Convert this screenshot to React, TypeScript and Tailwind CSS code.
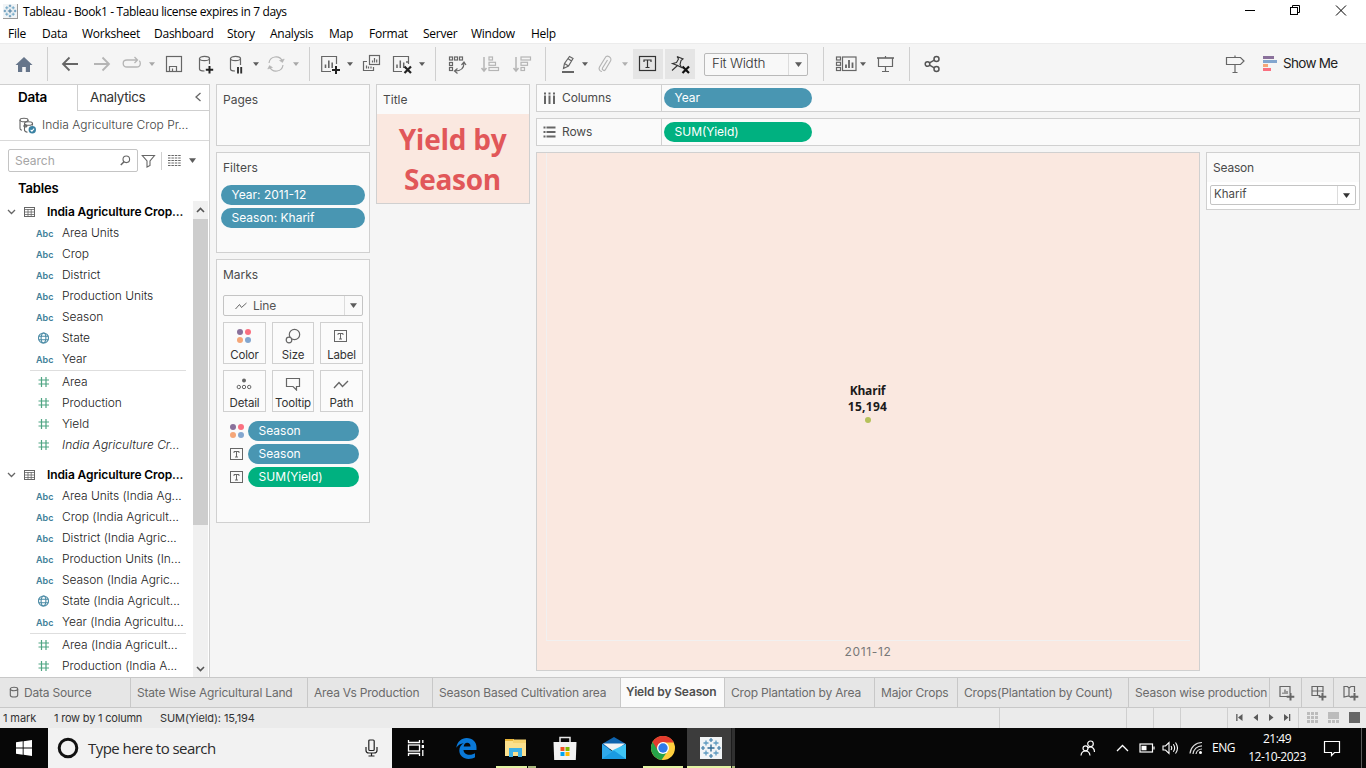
import React from 'react';

type Kids = { children?: React.ReactNode };

/* ---------- small drawing helpers ---------- */

function Ic({ children, cls = '', w = 20, h = 20, stroke = '#666666', sw = 1.2 }: Kids & { cls?: string; w?: number; h?: number; stroke?: string; sw?: number }) {
  return (
    <svg width={w} height={h} viewBox={`0 0 ${w} ${h}`} fill="none" stroke={stroke} strokeWidth={sw} className={`block shrink-0 ${cls}`}>
      {children}
    </svg>
  );
}

function Caret({ cls = '', color = '#5c5c5c', w = 6 }: { cls?: string; color?: string; w?: number }) {
  return (
    <svg width={w} height={w - 2} viewBox="0 0 6 4" preserveAspectRatio="none" className={`block shrink-0 ${cls}`}>
      <path d="M0 0.2H6L3 3.9Z" fill={color} />
    </svg>
  );
}

function Sep({ cls = '' }: { cls?: string }) {
  return <div className={`h-[34px] w-px shrink-0 bg-[#cfcfcf] ${cls}`} />;
}

function TableauMark({ size, cls = '' }: { size: number; cls?: string }) {
  const mid = [[6, 6], [16, 6], [6, 16], [16, 16]];
  const tiny = [[11, 3], [11, 19], [3, 11], [19, 11]];
  return (
    <svg width={size} height={size} viewBox="0 0 22 22" className={`block shrink-0 ${cls}`}>
      <rect width="22" height="22" fill="#f1f4f6" />
      <path d="M11 7.5V14.5M7.5 11H14.5" stroke="#2f6a94" strokeWidth="1.4" />
      {mid.map(([x, y]) => (
        <path key={`${x}-${y}`} d={`M${x} ${y - 2.5}V${y + 2.5}M${x - 2.5} ${y}H${x + 2.5}`} stroke="#5f9bc0" strokeWidth="1.3" />
      ))}
      {tiny.map(([x, y]) => (
        <path key={`${x}-${y}`} d={`M${x} ${y - 2}V${y + 2}M${x - 2} ${y}H${x + 2}`} stroke="#3b7ba6" strokeWidth="1.2" />
      ))}
    </svg>
  );
}

function ColorDots() {
  return (
    <svg width="16" height="16" viewBox="0 0 16 16" className="block shrink-0">
      <circle cx="4" cy="4" r="3" fill="#8a719b" />
      <circle cx="12" cy="4" r="3" fill="#fa7080" />
      <circle cx="4" cy="12" r="3" fill="#f5a678" />
      <circle cx="12" cy="12" r="3" fill="#83a6cf" />
    </svg>
  );
}

function LabelIcon() {
  return (
    <Ic w={14} h={13} sw={1}>
      <rect x="0.5" y="0.5" width="12" height="11" />
      <path d="M4 5V3.5H9V5M6.5 3.5V9M5 9H8" />
    </Ic>
  );
}

/* ---------- window chrome ---------- */

function TitleBar() {
  return (
    <div className="flex h-[22px] items-center bg-white pl-[3px] font-['Open_Sans',sans-serif] text-[12px] text-black">
      <div className="mt-px h-[15px] w-[15px] border-r border-b border-[#9a9a9a]">
        <TableauMark size={14} />
      </div>
      <div className="mt-[2px] ml-[5px] tracking-[-0.36px] whitespace-nowrap">Tableau - Book1 - Tableau license expires in 7 days</div>
      <Ic w={110} h={20} cls="mr-[14px] ml-auto" stroke="#000" sw={1}>
        <path d="M3 9.5H13" />
        <path d="M50.5 6.5V4.5H57.5V11.5H55.5" />
        <rect x="48.5" y="6.5" width="7" height="7" />
        <path d="M94 4.5L104 14.5M104 4.5L94 14.5" />
      </Ic>
    </div>
  );
}

function MenuBar() {
  return (
    <div className="flex h-[21px] items-center bg-white pl-2 font-['Open_Sans',sans-serif] text-[12px] tracking-[-0.25px] text-black">
      <div className="mt-[2px] w-[34px]">File</div>
      <div className="mt-[2px] w-10">Data</div>
      <div className="mt-[2px] w-[72px]">Worksheet</div>
      <div className="mt-[2px] w-[73px]">Dashboard</div>
      <div className="mt-[2px] w-[43px]">Story</div>
      <div className="mt-[2px] w-[59px]">Analysis</div>
      <div className="mt-[2px] w-10">Map</div>
      <div className="mt-[2px] w-[54px]">Format</div>
      <div className="mt-[2px] w-12">Server</div>
      <div className="mt-[2px] w-[60px]">Window</div>
      <div className="mt-[2px]">Help</div>
    </div>
  );
}

function Toolbar() {
  return (
    <div className="flex h-[41px] items-center border-t border-[#ececec] bg-[#f5f5f5]">
      <Ic cls="ml-[14px]" stroke="none">
        <path d="M1.5 11L10 3L18.5 11H16V18H11.8V13H8.2V18H4V11Z" fill="#66758a" />
      </Ic>
      <Sep cls="ml-[13px]" />
      <Ic cls="ml-3" sw={1.8}><path d="M18 10H3M9.5 3.5L3 10L9.5 16.5" /></Ic>
      <Ic cls="ml-3" stroke="#b5b5b5" sw={1.8}><path d="M2 10H17M10.5 3.5L17 10L10.5 16.5" /></Ic>
      <Ic cls="ml-[10px]" stroke="#b5b5b5" sw={1.3}>
        <path d="M15 6H5Q1.2 6 1.2 9.5T5 13H14.5Q18.3 13 18.3 9.5Q18.3 7.5 17.2 6.8M12.5 3L15.5 6L12.5 9" />
      </Ic>
      <Caret cls="ml-[7px]" color="#a8a8a8" />
      <Ic cls="ml-[9px]"><rect x="2.5" y="2.5" width="15" height="15" /><path d="M5.5 17.5V12.5H12.5V17.5M8.5 17V14.5" /></Ic>
      <Ic cls="ml-3">
        <ellipse cx="8.5" cy="4.5" rx="5" ry="2.2" />
        <path d="M3.5 4.5V15C3.5 16.3 6 17 8.5 17M13.5 4.5V10" />
        <path d="M13.5 12V19.5M9.8 15.8H17.2" stroke="#222" strokeWidth="2" />
      </Ic>
      <Ic cls="ml-[10px]">
        <ellipse cx="9.5" cy="4.5" rx="5" ry="2.2" />
        <path d="M4.5 4.5V15C4.5 16.3 6.5 17 9 17M14.5 4.5V11" />
        <path d="M12 13V19.5M15.2 13V19.5" stroke="#333" strokeWidth="1.9" />
      </Ic>
      <Caret cls="ml-[7px]" />
      <Ic cls="ml-[7px]" stroke="#b5b5b5">
        <path d="M3 9A7 7 0 0 1 16.3 7M17 11A7 7 0 0 1 3.7 13" />
        <path d="M18.3 5L16.5 8.5L13.5 6.5ZM1.7 15L3.5 11.5L6.5 13.5Z" fill="#b5b5b5" strokeWidth="0.5" />
      </Ic>
      <Caret cls="ml-[7px]" color="#a8a8a8" />
      <Sep cls="ml-[10px]" />
      <Ic cls="ml-[11px]">
        <path d="M10 17.5H0.7V2.5H15.5V10" />
        <path d="M4.5 14V10.5M7.8 14V6.5M11.2 14V8.5" strokeWidth="1.6" />
        <path d="M15 12V20M11 16H19" stroke="#222" strokeWidth="2" />
      </Ic>
      <Caret cls="ml-[6px]" />
      <Ic cls="ml-2">
        <rect x="8.5" y="1.5" width="10" height="9" />
        <path d="M11.5 8.5V6.5M13.5 8.5V4M15.7 8.5V5.5" />
        <path d="M6 7.5H2.5V16.5H12.5V13M5.5 14.5V11.5M7.5 14.5V12.5M10 14.5V12.5" />
      </Ic>
      <Ic cls="ml-[11px]">
        <path d="M10 17.5H1.5V2.5H16.5V10" />
        <path d="M5 14V10.5M8.3 14V6.5M11.7 14V8.5M15 9V7" strokeWidth="1.5" />
        <path d="M12.5 12.5L19 19M19 12.5L12.5 19" stroke="#222" strokeWidth="2.2" />
      </Ic>
      <Caret cls="ml-[7px]" />
      <Sep cls="ml-[10px]" />
      <Ic cls="ml-[11px]">
        <rect x="2.5" y="3" width="3" height="3" /><rect x="7.5" y="3" width="3" height="3" /><rect x="12.5" y="3" width="3" height="3" />
        <rect x="2.5" y="8.5" width="3" height="3" /><rect x="2.5" y="13.5" width="3" height="3" />
        <path d="M17 9C17 14 14 17 8 17M14.5 11L17 8L19 11M10.5 14.5L7.5 17L10.5 19.5" />
      </Ic>
      <Ic cls="ml-[13px]" stroke="#b5b5b5">
        <path d="M4 3V16.5M1.5 14L4 17L6.5 14" strokeWidth="1.5" />
        <rect x="9" y="3" width="3.5" height="3" /><rect x="9" y="8.3" width="6.5" height="3" /><rect x="9" y="13.5" width="9.5" height="3" />
      </Ic>
      <Ic cls="ml-3" stroke="#b5b5b5">
        <path d="M4 3V16.5M1.5 14L4 17L6.5 14" strokeWidth="1.5" />
        <rect x="9" y="3" width="9.5" height="3" /><rect x="9" y="8.3" width="6.5" height="3" /><rect x="9" y="13.5" width="3.5" height="3" />
      </Ic>
      <Sep cls="ml-[13px]" />
      <Ic cls="ml-3">
        <path d="M5.5 14.5L6.5 9.5L11.5 2.5L15 4.5L10.5 12L5.5 14.5ZM6.5 9.5L10.5 12M10.2 4.8L13.5 7" />
        <path d="M4 18H16" strokeWidth="2" />
      </Ic>
      <Caret cls="ml-1" />
      <Ic cls="ml-[7px]" stroke="#b5b5b5">
        <path d="M12.5 6L7.5 14A1.6 1.6 0 0 0 10.5 15.5L15.5 7A3 3 0 0 0 10 4L4.5 13A3 3 0 0 0 7 17.5" />
      </Ic>
      <Caret cls="ml-[7px]" color="#b0b0b0" />
      <div className="ml-[5px] flex h-[30px] w-[30px] items-center justify-center bg-[#e5e5e5]">
        <Ic stroke="#333"><rect x="1.5" y="2.5" width="16" height="14" /><path d="M6 8V6H13V8M9.5 6V13.5M7.5 13.5H11.5" /></Ic>
      </div>
      <div className="ml-[2px] flex h-[30px] w-[30px] items-center justify-center bg-[#e5e5e5]">
        <Ic stroke="#333" sw={1.1}>
          <path d="M7 2.5L13 5L11 6.5L10 10.5L11.5 13.5L7.5 11.5L2 16.5M7.5 11.5L2.5 9.5L6.5 8.5L8.5 5L7 2.5" />
          <path d="M12.5 12.5L19 19M19 12.5L12.5 19" stroke="#111" strokeWidth="2.2" />
        </Ic>
      </div>
      <div className="ml-[9px] flex h-[23px] w-[104px] items-center rounded-[2px] border border-[#b9b9b9] bg-[#f8f8f8]">
        <div className="flex h-full flex-1 items-center pb-[2px] pl-[7px] text-[13.5px] font-light tracking-[-0.25px] text-[#333]">Fit Width</div>
        <div className="flex h-full w-[19px] items-center justify-center border-l border-[#dcdcdc]"><Caret w={7} /></div>
      </div>
      <Sep cls="ml-[15px]" />
      <Ic cls="ml-[11px]" w={22}>
        <rect x="1.5" y="3" width="4" height="3" /><rect x="1.5" y="8.3" width="4" height="3" /><rect x="1.5" y="13.5" width="4" height="3" />
        <rect x="7.5" y="3" width="13.5" height="13.5" />
        <path d="M11 14V10.5M14 14V6M17.5 14V8.5" strokeWidth="1.8" />
      </Ic>
      <Caret cls="ml-[3px]" />
      <Ic cls="ml-[9px]">
        <path d="M2 4H19" strokeWidth="1.6" />
        <path d="M3.5 4V12.5H17.5V4M10.5 2V4M10.5 12.5V17.5M7 17.5H14" />
      </Ic>
      <Sep cls="ml-[14px]" />
      <Ic cls="ml-3" sw={1.5} stroke="#555">
        <circle cx="5.5" cy="10" r="2.3" /><circle cx="14.5" cy="5" r="2.5" /><circle cx="14.5" cy="15" r="2.5" />
        <path d="M7.5 8.8L12.3 6.2M7.5 11.2L12.3 13.8" />
      </Ic>
      <Ic cls="mr-[18px] ml-auto">
        <path d="M1.5 3.5H15.5L19 7L15.5 10.5H1.5ZM10 1.5V3.5M10 10.5V18.5M7.5 18.5H12.5" />
      </Ic>
      <svg width="15" height="16" viewBox="0 0 15 16" className="block shrink-0">
        <rect width="11" height="3" fill="#8a719b" /><rect y="4" width="14" height="3" fill="#83a6cf" />
        <rect y="8" width="5" height="3" fill="#f5a678" /><rect y="12" width="8" height="3" fill="#fa7080" />
      </svg>
      <div className="mr-[27px] ml-[5px] w-[56px] pb-[2px] text-[13.5px] tracking-[-0.7px] whitespace-nowrap text-[#222]">Show Me</div>
    </div>
  );
}

/* ---------- data pane ---------- */

type Kind = 'abc' | 'geo' | 'num';

function FieldRow({ kind, label, italic = false }: { kind: Kind; label: string; italic?: boolean }) {
  return (
    <div className="flex h-[21px] items-center pb-[2px] pl-[36px]">
      <div className="w-[26px] text-[9px] font-semibold text-[#3f7f99]">
        {kind === 'abc' && <span className="relative top-px">Abc</span>}
        {kind === 'geo' && (
          <Ic w={16} h={12} stroke="#4a8aa5" sw={1.1}>
            <circle cx="7.5" cy="6" r="5" /><ellipse cx="7.5" cy="6" rx="2.4" ry="5" /><path d="M2.5 4.3H12.5M2.5 7.7H12.5" />
          </Ic>
        )}
        {kind === 'num' && (
          <Ic w={16} h={12} stroke="#4fa583" sw={1.2}>
            <path d="M5.5 1V11M10 1V11M2.5 4H13M2.5 8H13" />
          </Ic>
        )}
      </div>
      <div className={italic ? 'text-[12px] font-light whitespace-nowrap text-[#222] italic' : 'text-[12px] font-light tracking-[-0.05px] whitespace-nowrap text-[#222]'}>{label}</div>
    </div>
  );
}

function TableHeader() {
  return (
    <div className="flex h-[22px] items-center pl-[7px]">
      <Ic w={9} h={6} sw={1.3}><path d="M1 1L4.5 4.5L8 1" /></Ic>
      <Ic w={11} h={10} cls="ml-2" sw={1}><rect x="0.5" y="0.5" width="10" height="9" /><path d="M0 2.5H11M0 5H11M0 7.5H11M4 2V10M7.2 2V10" strokeWidth="0.8" /></Ic>
      <div className="ml-[12px] text-[12px] font-semibold tracking-[-0.1px] whitespace-nowrap text-black">India Agriculture Crop...</div>
    </div>
  );
}

const firstDims: [Kind, string][] = [['abc', 'Area Units'], ['abc', 'Crop'], ['abc', 'District'], ['abc', 'Production Units'], ['abc', 'Season'], ['geo', 'State'], ['abc', 'Year']];
const secondDims: [Kind, string][] = [
  ['abc', 'Area Units (India Ag...'], ['abc', 'Crop (India Agricult...'], ['abc', 'District (India Agric...'], ['abc', 'Production Units (In...'],
  ['abc', 'Season (India Agric...'], ['geo', 'State (India Agricult...'], ['abc', 'Year (India Agricultu...'],
];

function DataPane() {
  return (
    <div className="flex w-[210px] shrink-0 flex-col border-t border-r border-[#cfcfcf] bg-white text-[#333]">
      <div className="flex h-[26px] shrink-0 text-[13.5px]">
        <div className="w-[77px] pt-[2px] pl-[18px] font-semibold tracking-[-0.3px] text-black">Data</div>
        <div className="flex flex-1 items-start justify-between border-b border-l border-[#cfcfcf] pt-[2px] pr-[7px] pl-[12px] tracking-[-0.35px]">
          Analytics
          <Ic w={8} h={10} cls="mt-[5px]" sw={1.3}><path d="M6.5 1L2 5L6.5 9" /></Ic>
        </div>
      </div>
      <div className="flex h-[30px] shrink-0 items-center border-b border-[#d9d9d9] pl-[19px] text-[12px] text-[#444]">
        <Ic w={18} h={17} sw={1.1}>
          <ellipse cx="5" cy="3" rx="4" ry="1.8" /><path d="M1 3V11.5C1 12.5 2 13 3 13.3M9 3V4" />
          <ellipse cx="9.5" cy="6.5" rx="4" ry="1.8" /><path d="M5.5 6.5V13C5.5 14 7 15 8.5 15.2M13.5 6.5V8.5M4 9H8M6.5 7.5L8 9L6.5 10.5" />
          <circle cx="13.3" cy="12.8" r="3.7" fill="#3a82a3" stroke="none" /><path d="M11.6 12.8L12.9 14.1L15.1 11.6" stroke="#fff" />
        </Ic>
        <div className="ml-[5px] pb-px font-light whitespace-nowrap">India Agriculture Crop Pr...</div>
      </div>
      <div className="flex h-[39px] shrink-0 items-center pl-2">
        <div className="flex h-[23px] w-[130px] items-center justify-between rounded-[2px] border border-[#c4c4c4] pr-[6px] pl-[6px] text-[12px] text-[#a5a5a5]">
          Search
          <Ic w={11} h={11} sw={1.1}><circle cx="6.3" cy="4.3" r="3.3" /><path d="M4 6.8L0.8 10" strokeWidth="1.5" /></Ic>
        </div>
        <Ic w={15} h={14} cls="ml-[3px]" sw={1.1}><path d="M1.3 1.5H13.5L9 7V11.5L6 13V7Z" /></Ic>
        <div className="ml-[5px] h-[18px] w-px bg-[#d0d0d0]" />
        <Ic w={13} h={11} cls="ml-[6px]" sw={1}><path d="M0 0.5H13M0 3H13M0 5.5H13M0 8H13M0 10.5H13" strokeDasharray="2.5 0.9" /></Ic>
        <Caret cls="ml-[8px]" w={7} />
      </div>
      <div className="h-[21px] shrink-0 pl-[18px] text-[13px] leading-[17px] font-semibold tracking-[-0.15px] text-black">Tables</div>
      <div className="flex min-h-0 flex-1">
        <div className="min-w-0 flex-1 overflow-hidden">
          <TableHeader />
          {firstDims.map(([k, l]) => <FieldRow key={l} kind={k} label={l} />)}
          <div className="mr-[7px] ml-[30px] h-px bg-[#dedede]" />
          <div className="h-px" />
          <FieldRow kind="num" label="Area" />
          <FieldRow kind="num" label="Production" />
          <FieldRow kind="num" label="Yield" />
          <FieldRow kind="num" label="India Agriculture Cr..." italic />
          <div className="h-2" />
          <TableHeader />
          {secondDims.map(([k, l]) => <FieldRow key={l} kind={k} label={l} />)}
          <div className="mr-[7px] ml-[30px] h-px bg-[#dedede]" />
          <div className="h-px" />
          <FieldRow kind="num" label="Area (India Agricult..." />
          <FieldRow kind="num" label="Production (India A..." />
        </div>
        <div className="mr-px flex w-[15px] shrink-0 flex-col items-center justify-between bg-[#f0f0f0] pb-[5px]">
          <div className="flex w-full flex-col items-center pt-[6px]">
            <Ic w={9} h={6} sw={1.6} stroke="#555"><path d="M1 5L4.5 1.5L8 5" /></Ic>
            <div className="mt-[6px] h-[306px] w-full bg-[#cdcdcd]" />
          </div>
          <Ic w={9} h={6} sw={1.6} stroke="#555"><path d="M1 1L4.5 4.5L8 1" /></Ic>
        </div>
      </div>
    </div>
  );
}

/* ---------- shelves and cards ---------- */

function Pill({ children, cls = '' }: Kids & { cls?: string }) {
  return <div className={`flex h-5 items-center rounded-full pl-[10.5px] text-[12px] whitespace-nowrap text-white ${cls}`}>{children}</div>;
}

function MarkButton({ icon, label, w }: { icon: React.ReactNode; label: string; w: string }) {
  return (
    <div className={`flex h-[42px] flex-col items-center border border-[#d0d0d0] bg-[#fbfbfb] text-[11.5px] text-[#333] ${w}`}>
      <div className="flex h-[26px] items-center pr-px">{icon}</div>
      <div className="-mt-px leading-[14px] tracking-[-0.15px] whitespace-nowrap">{label}</div>
    </div>
  );
}

function Cards() {
  return (
    <div className="flex w-[154px] shrink-0 flex-col gap-[6px] text-[12px] text-[#4a4a4a]">
      <div className="h-[62px] border border-[#d0d0d0] bg-[#fafafa] pt-[6px] pl-[6px]">Pages</div>
      <div className="h-[101px] border border-[#d0d0d0] bg-[#fafafa] px-1 pt-[6px]">
        <div className="pl-[2px]">Filters</div>
        <div className="mt-[8px] flex flex-col gap-[3px]">
          <Pill cls="bg-[#4996b2]">Year: 2011-12</Pill>
          <Pill cls="bg-[#4996b2]">Season: Kharif</Pill>
        </div>
      </div>
      <div className="h-[264px] border border-[#d0d0d0] bg-[#fafafa] px-[6px] pt-[6px]">
        <div>Marks</div>
        <div className="mt-[11px] flex h-[21px] w-[140px] items-center rounded-[2px] border border-[#c4c4c4] text-[#555]">
          <Ic w={12} h={8} cls="ml-[11px]" sw={1}><path d="M0.5 7L4.5 2.5L6.5 5.5L11.5 1" /></Ic>
          <div className="ml-[6px] flex-1 tracking-[-0.2px]">Line</div>
          <div className="flex h-full w-[18px] items-center justify-center border-l border-[#dcdcdc]"><Caret w={7} /></div>
        </div>
        <div className="mt-[6px] flex w-[140px] justify-between">
          <MarkButton w="w-[43px]" label="Color" icon={<ColorDots />} />
          <MarkButton w="w-[42px]" label="Size" icon={<Ic w={16} h={16}><circle cx="9.5" cy="6.5" r="5.2" /><circle cx="4" cy="12" r="2.8" fill="#fbfbfb" /></Ic>} />
          <MarkButton w="w-[43px]" label="Label" icon={<LabelIcon />} />
        </div>
        <div className="mt-[6px] flex w-[140px] justify-between">
          <MarkButton w="w-[43px]" label="Detail" icon={<Ic w={16} h={14} sw={1}><circle cx="8" cy="3.5" r="2" fill="#666" stroke="none" /><circle cx="2.8" cy="10" r="1.7" /><circle cx="8" cy="10" r="1.7" /><circle cx="13.2" cy="10" r="1.7" /></Ic>} />
          <MarkButton w="w-[42px]" label="Tooltip" icon={<Ic w={16} h={14}><path d="M1.5 1.5H14.5V9.5H11.5V13L8 9.5H1.5Z" /></Ic>} />
          <MarkButton w="w-[43px]" label="Path" icon={<Ic w={16} h={12} sw={1.4}><path d="M1 10L6 4.5L9.5 8.5L15 3" /></Ic>} />
        </div>
        <div className="mt-[9px] flex flex-col gap-[3px] pl-[6px]">
          <div className="flex items-center gap-[3px]"><ColorDots /><Pill cls="w-[111px] bg-[#4996b2]">Season</Pill></div>
          <div className="flex items-center gap-[4px] pl-px"><LabelIcon /><Pill cls="w-[111px] bg-[#4996b2]">Season</Pill></div>
          <div className="flex items-center gap-[4px] pl-px"><LabelIcon /><Pill cls="w-[111px] bg-[#00b180]">SUM(Yield)</Pill></div>
        </div>
      </div>
    </div>
  );
}

function Shelf({ icon, label, children }: Kids & { icon: React.ReactNode; label: string }) {
  return (
    <div className="flex h-[28px] shrink-0 items-center border border-[#d0d0d0] bg-[#fafafa] text-[12px] text-[#4a4a4a]">
      <div className="flex h-full w-[125px] items-center border-r border-[#d0d0d0] pl-[6px]">
        {icon}
        <div className="ml-[6px] tracking-[-0.1px]">{label}</div>
      </div>
      {children}
    </div>
  );
}

function Workspace() {
  return (
    <div className="flex min-w-0 flex-1 gap-[6px] pr-[6px] pb-[6px] pl-[6px]">
      <Cards />
      <div className="flex w-[154px] shrink-0 flex-col">
        <div className="flex h-[120px] flex-col border border-[#d0d0d0] bg-[#fafafa]">
          <div className="h-[29px] shrink-0 pt-[6px] pl-[6px] text-[12px] text-[#4a4a4a]">Title</div>
          <div className="flex-1 bg-[#fae8e0] pt-[5px] pr-px text-center font-['Open_Sans',sans-serif] text-[28px] leading-[40px] font-bold tracking-[-0.25px] text-[#e15759]">
            Yield by<br />Season
          </div>
        </div>
      </div>
      <div className="flex min-w-0 flex-1 flex-col gap-[6px]">
        <Shelf label="Columns" icon={<Ic w={13} h={13} sw={2}><path d="M2 3.5V12M6.5 3.5V12M11 3.5V12M2 0.5V2.5M6.5 0.5V2.5M11 0.5V2.5" /></Ic>}>
          <Pill cls="ml-[2px] w-[148px] bg-[#4996b2]">Year</Pill>
        </Shelf>
        <Shelf label="Rows" icon={<Ic w={13} h={13} sw={1.8}><path d="M3.5 1.5H12.5M3.5 6H12.5M3.5 10.5H12.5M0.5 1.5H2.5M0.5 6H2.5M0.5 10.5H2.5" /></Ic>}>
          <Pill cls="ml-[2px] w-[148px] bg-[#00b180]">SUM(Yield)</Pill>
        </Shelf>
        <div className="flex min-h-0 flex-1 gap-[6px]">
          <div className="flex flex-1 flex-col border border-[#d0d0d0] bg-[#fae8e0] pr-[9px] pl-[9px]">
            <div className="flex flex-1 flex-col items-center border-b border-l border-[#f1f0f0] pt-[230px] pr-[2px] font-['Open_Sans',sans-serif] text-[12px] leading-4 font-bold text-[#1a1a1a]">
              <div className="tracking-[-0.2px]">Kharif</div>
              <div className="tracking-[0.3px]">15,194</div>
              <div className="mt-[2px] mr-[-1px] h-[6px] w-[6px] rounded-full bg-[#b5c15a]" />
            </div>
            <div className="h-[29px] pt-[2px] text-center text-[12px] tracking-[0.65px] text-[#787878]">2011-12</div>
          </div>
          <div className="w-[154px] shrink-0">
            <div className="h-[58px] border border-[#d0d0d0] bg-white text-[12px] text-[#4a4a4a]">
              <div className="h-[29px] bg-[#fafafa] pt-[6px] pl-[6px] tracking-[-0.2px]">Season</div>
              <div className="mx-[3px] mt-[3px] flex h-5 items-center rounded-[2px] border border-[#c4c4c4] text-[11.5px]">
                <div className="flex-1 pl-[3px]">Kharif</div>
                <div className="flex h-full w-[18px] items-center justify-center border-l border-[#dcdcdc]"><Caret w={7} color="#333" /></div>
              </div>
            </div>
          </div>
        </div>
      </div>
    </div>
  );
}

/* ---------- bottom bars ---------- */

function SheetTab({ label, w }: { label: string; w: string }) {
  return <div className={`flex h-full items-center border-r border-[#c8c8c8] pl-[6px] whitespace-nowrap ${w}`}>{label}</div>;
}

function SheetTabs() {
  return (
    <div className="flex h-[31px] shrink-0 border-t border-b border-[#c8c8c8] bg-[#e6e6e6] text-[12px] tracking-[-0.19px] text-[#6b6b6b]">
      <div className="flex w-[131px] items-center border-r border-[#c8c8c8] pl-[9px]">
        <Ic w={10} h={12} sw={1.1} cls="-mt-[2px]"><ellipse cx="5" cy="3" rx="3.7" ry="1.7" /><path d="M1.3 3V9.3C1.3 11.6 8.7 11.6 8.7 9.3V3" /></Ic>
        <div className="ml-[5px]">Data Source</div>
      </div>
      <SheetTab w="w-[177px]" label="State Wise Agricultural Land" />
      <SheetTab w="w-[125px]" label="Area Vs Production" />
      <SheetTab w="w-[188px]" label="Season Based Cultivation area" />
      <div className="flex h-full w-[104px] items-center border-r border-[#c8c8c8] bg-[#fafafa] pb-[2px] pl-[5px] font-semibold tracking-[-0.15px] whitespace-nowrap text-[#4f4f4f]">Yield by Season</div>
      <SheetTab w="w-[150px]" label="Crop Plantation by Area" />
      <SheetTab w="w-[83px]" label="Major Crops" />
      <SheetTab w="w-[171px]" label="Crops(Plantation by Count)" />
      <SheetTab w="w-[141px]" label="Season wise production" />
      <div className="flex w-[32px] items-center justify-center border-r border-[#c8c8c8]">
        <Ic w={16} h={16} cls="ml-[3px]"><path d="M9 11.5H1V1.5H11V8M4 9V7.5M6 9V4.5M8 9V6" /><path d="M11.5 8V15.5M7.7 11.8H15.3" strokeWidth="2" /></Ic>
      </div>
      <div className="flex w-[32px] items-center justify-center border-r border-[#c8c8c8]">
        <Ic w={16} h={16} cls="ml-[3px]"><path d="M9 10.5H1V1.5H12V7.5M1 6H12M6.5 1.5V10.5" /><path d="M11.5 8V15.5M7.7 11.8H15.3" strokeWidth="2" /></Ic>
      </div>
      <div className="flex flex-1 items-center justify-center">
        <Ic w={16} h={16} cls="ml-[1px]"><path d="M8 12.5L6 11L1 12V1.5H4.5L6 3V11M6 3L8 1.5H11.5V7" /><path d="M11.5 8V15.5M7.7 11.8H15.3" strokeWidth="2" /></Ic>
      </div>
    </div>
  );
}

function StatusBar() {
  return (
    <div className="flex h-5 shrink-0 items-center bg-[#ebebeb] pl-[3px] text-[11px] text-[#333]">
      <div className="w-[51px] tracking-[-0.1px] whitespace-nowrap">1 mark</div>
      <div className="w-[106px] tracking-[-0.2px] whitespace-nowrap">1 row by 1 column</div>
      <div className="tracking-[-0.1px] whitespace-nowrap">SUM(Yield): 15,194</div>
      <div className="ml-auto flex h-full">
        <div className="h-full w-[127px] border-l border-[#cfcfcf]" />
        <div className="h-full w-[27px] border-l border-[#cfcfcf]" />
        <div className="h-full w-[27px] border-l border-[#cfcfcf]" />
        <div className="h-full w-[47px] border-l border-[#cfcfcf]" />
        <div className="flex h-full w-[71px] items-center border-l border-[#cfcfcf]">
          <svg width="70" height="10" viewBox="0 0 70 10" fill="#5a5a5a" className="block">
            <path d="M8.2 1H9.5V8H8.2ZM14.5 1V8L10 4.5Z" />
            <path d="M30 1V8L25.5 4.5Z" />
            <path d="M41 1V8L45.5 4.5Z" />
            <path d="M56 1V8L60.5 4.5ZM61 1H62.3V8H61Z" />
          </svg>
        </div>
        <div className="flex h-full w-[68px] items-center border-l border-[#cfcfcf]">
          <svg width="66" height="12" viewBox="0 0 66 12" className="block">
            {[0, 4, 8].map((x) => [0, 4, 8].map((y) => <rect key={`${x}-${y}`} x={8 + x} y={y} width="3" height="3" fill="#bcbcbc" />))}
            <rect x="29" y="0" width="11" height="7" fill="#bcbcbc" />
            <rect x="29" y="8" width="3" height="3" fill="#bcbcbc" /><rect x="33" y="8" width="3" height="3" fill="#bcbcbc" /><rect x="37" y="8" width="3" height="3" fill="#bcbcbc" />
            <rect x="50" y="0" width="11" height="11" fill="#666" />
          </svg>
        </div>
      </div>
    </div>
  );
}

function TaskSlot({ children, cls = '' }: Kids & { cls?: string }) {
  return <div className={`flex h-full w-[49px] shrink-0 flex-col items-center ${cls}`}>{children}</div>;
}

function Taskbar() {
  return (
    <div className="flex h-10 shrink-0 items-center bg-[#070707] font-['Open_Sans',sans-serif] text-white">
      <div className="flex w-12 items-center justify-center">
        <svg width="16" height="16" viewBox="0 0 16 16" fill="#fff"><path d="M0 2.2L6.7 1.3V7.5H0ZM7.6 1.2L16 0V7.5H7.6ZM0 8.4H6.7V14.7L0 13.8ZM7.6 8.4H16V16L7.6 14.8Z" /></svg>
      </div>
      <div className="flex h-full w-[344px] items-center bg-[#f2f2f2] text-[15px] text-[#2b2b2b]">
        <Ic w={22} h={22} cls="ml-[9px]" stroke="#111" sw={3}><circle cx="11" cy="11" r="8.8" /></Ic>
        <div className="ml-[9px] flex-1 tracking-[-0.55px]">Type here to search</div>
        <Ic w={13} h={18} cls="mr-[14px]" stroke="#222" sw={1.2}><rect x="3.8" y="1" width="5.4" height="10.5" rx="1" /><path d="M1 8V11.5Q1 14 4 14H9Q12 14 12 11.5V8M6.5 14V17M3.5 17H9.5" /></Ic>
      </div>
      <TaskSlot cls="pt-[11px] pr-[2px]">
        <Ic w={18} h={18} stroke="#fff" sw={1.3}><path d="M1.5 1V3.5H12.5V1M1.5 17V14.5H12.5V17" /><rect x="1.5" y="6" width="11" height="6" /><path d="M15.8 1V4M15.8 11V17" /><rect x="14.7" y="6" width="2.3" height="3" fill="#fff" stroke="none" /></Ic>
      </TaskSlot>
      <TaskSlot cls="ml-[1px] pt-[10px]">
        <svg width="21" height="21" viewBox="0 0 21 21" className="block">
          <path d="M0.3 9.8C1 3.8 5.5 0 10.7 0C16.5 0 20.5 4 20.5 9.2V12H7.5C7.6 15 10.2 16.8 13.5 16.8C15.8 16.8 17.8 16 19 15.2V19.3C17.3 20.4 15 21 12.6 21C7.2 21 3.3 17.5 3.3 12.6C3.3 9.3 5 6.8 7.7 5.3C4.7 5.5 2 7 0.3 9.8ZM7.7 8.4H14.5C14.5 6 13.2 4.8 11.2 4.8C9.2 4.8 8 6.3 7.7 8.4Z" fill="#0a78d7" />
        </svg>
      </TaskSlot>
      <TaskSlot cls="justify-between pt-[10px]">
        <svg width="23" height="20" viewBox="0 0 23 20" className="block">
          <path d="M1 1H10V4H1Z" fill="#e8b437" /><path d="M1 3H22V18H1Z" fill="#fbe08d" /><path d="M9 1.5H22V5H9Z" fill="#f6d36f" />
          <path d="M5 10H18V19H14V14H9V19H5Z" fill="#3eb1e6" />
        </svg>
        <div className="flex h-[2px] w-10"><div className="w-[31px] bg-[#e2f3a3]" /><div className="ml-px w-2 bg-[#a9b87d]" /></div>
      </TaskSlot>
      <TaskSlot cls="pt-[8px]">
        <svg width="24" height="25" viewBox="0 0 24 25" className="block">
          <path d="M7 8V1.5H17V8" fill="none" stroke="#e8e8e8" strokeWidth="1.5" /><path d="M0.5 6H23.5L22.8 24H1.2Z" fill="#f2f2f2" />
          <rect x="7.5" y="11" width="4" height="4" fill="#f25022" /><rect x="12.5" y="11" width="4" height="4" fill="#7fba00" />
          <rect x="7.5" y="16" width="4" height="4" fill="#00a4ef" /><rect x="12.5" y="16" width="4" height="4" fill="#ffb900" />
        </svg>
      </TaskSlot>
      <TaskSlot cls="pt-[9px]">
        <svg width="24" height="22" viewBox="0 0 24 22" className="block">
          <path d="M0 7L12 0L24 7V12H0Z" fill="#0f63ad" /><path d="M1 6.5H23L12 15Z" fill="#f3f3f3" />
          <path d="M0 7L14 17L24 22H0Z" fill="#2fa8ea" /><path d="M24 7V22H18L9.5 13.7Z" fill="#3ec4f5" /><path d="M0 22L12 13.5L24 22Z" fill="#1a9be2" />
        </svg>
      </TaskSlot>
      <TaskSlot cls="justify-between pt-[8px]">
        <svg width="24" height="24" viewBox="0 0 24 24" className="block">
          <circle cx="12" cy="12" r="12" fill="#ffcf3e" />
          <path d="M12 12L1.6 6A12 12 0 0 0 10.5 23.9L17 14.5Z" fill="#26a349" />
          <path d="M12 6.5H22.7A12 12 0 0 0 1.6 6L7 14.5Z" fill="#e33b2e" />
          <circle cx="12" cy="12" r="6" fill="#fff" /><circle cx="12" cy="12" r="4.7" fill="#2f7be9" />
        </svg>
        <div className="h-[2px] w-10 bg-[#e2f3a3]" />
      </TaskSlot>
      <div className="flex h-full w-[45px] shrink-0 flex-col items-center justify-between border-r border-[#1c1c1c] bg-[#3c3c3c] pt-[9px]">
        <TableauMark size={22} cls="ml-[4px]" />
        <div className="h-[2px] w-full bg-[#e2f3a3]" />
      </div>
      <div className="flex h-full w-[3px] flex-col justify-end bg-[#303030]"><div className="h-[2px] bg-[#a9b87d]" /></div>
      <div className="ml-auto flex h-full items-center">
        <Ic w={16} h={16} stroke="#fff" sw={1.2}><circle cx="10.5" cy="3.8" r="2.8" /><path d="M8 8Q10.5 6 13 8Q14.5 9.3 14.5 12" /><circle cx="5.5" cy="8.3" r="2.5" /><path d="M1 15.5Q1.5 11 5.5 11Q9.5 11 10 15.5" /></Ic>
        <Ic w={13} h={8} cls="ml-[20px]" stroke="#fff" sw={1.3}><path d="M1 7L6.5 1.5L12 7" /></Ic>
        <Ic w={16} h={10} cls="ml-[10px]" stroke="#fff" sw={1.2}><rect x="1" y="1" width="12.5" height="8" /><path d="M15 3.5V6.5" /><rect x="2.5" y="2.8" width="5" height="4.5" fill="#fff" stroke="none" /></Ic>
        <Ic w={18} h={14} cls="ml-[7px]" stroke="#fff" sw={1.1}><path d="M1 5H3.5L7 1.5V12.5L3.5 9H1ZM9 5Q10.5 7 9 9M11.3 3.3Q14 7 11.3 10.7M13.5 1.5Q17.5 7 13.5 12.5" /></Ic>
        <Ic w={14} h={14} cls="ml-[9px]" stroke="#ddd" sw={1.2}><path d="M1 12.5A12 12 0 0 1 13 1.5M4 13A9 9 0 0 1 13 4.8M7 13A6 6 0 0 1 13 8" /><circle cx="11.5" cy="11.5" r="1.5" fill="#fff" stroke="none" /></Ic>
        <div className="ml-[9px] w-[34px] text-[12px] tracking-[-0.5px]">ENG</div>
        <div className="w-[62px] text-center text-[12px] leading-[18px] tracking-[-0.5px] whitespace-nowrap">21:49<br />12-10-2023</div>
        <Ic w={18} h={17} cls="ml-[15px]" stroke="#fff" sw={1.2}><path d="M1.5 1.5H16.5V12.5H11.5L8.5 15.5V12.5H1.5Z" /></Ic>
        <div className="mr-1 ml-[20px] h-full w-px bg-[#5a5a5a]" />
      </div>
    </div>
  );
}

export default function App() {
  return (
    <div className="flex h-[768px] w-[1366px] flex-col overflow-hidden bg-[#f5f5f5] font-['Inter',sans-serif]">
      <TitleBar />
      <MenuBar />
      <Toolbar />
      <div className="flex h-[593px] shrink-0">
        <DataPane />
        <Workspace />
      </div>
      <SheetTabs />
      <StatusBar />
      <Taskbar />
    </div>
  );
}
